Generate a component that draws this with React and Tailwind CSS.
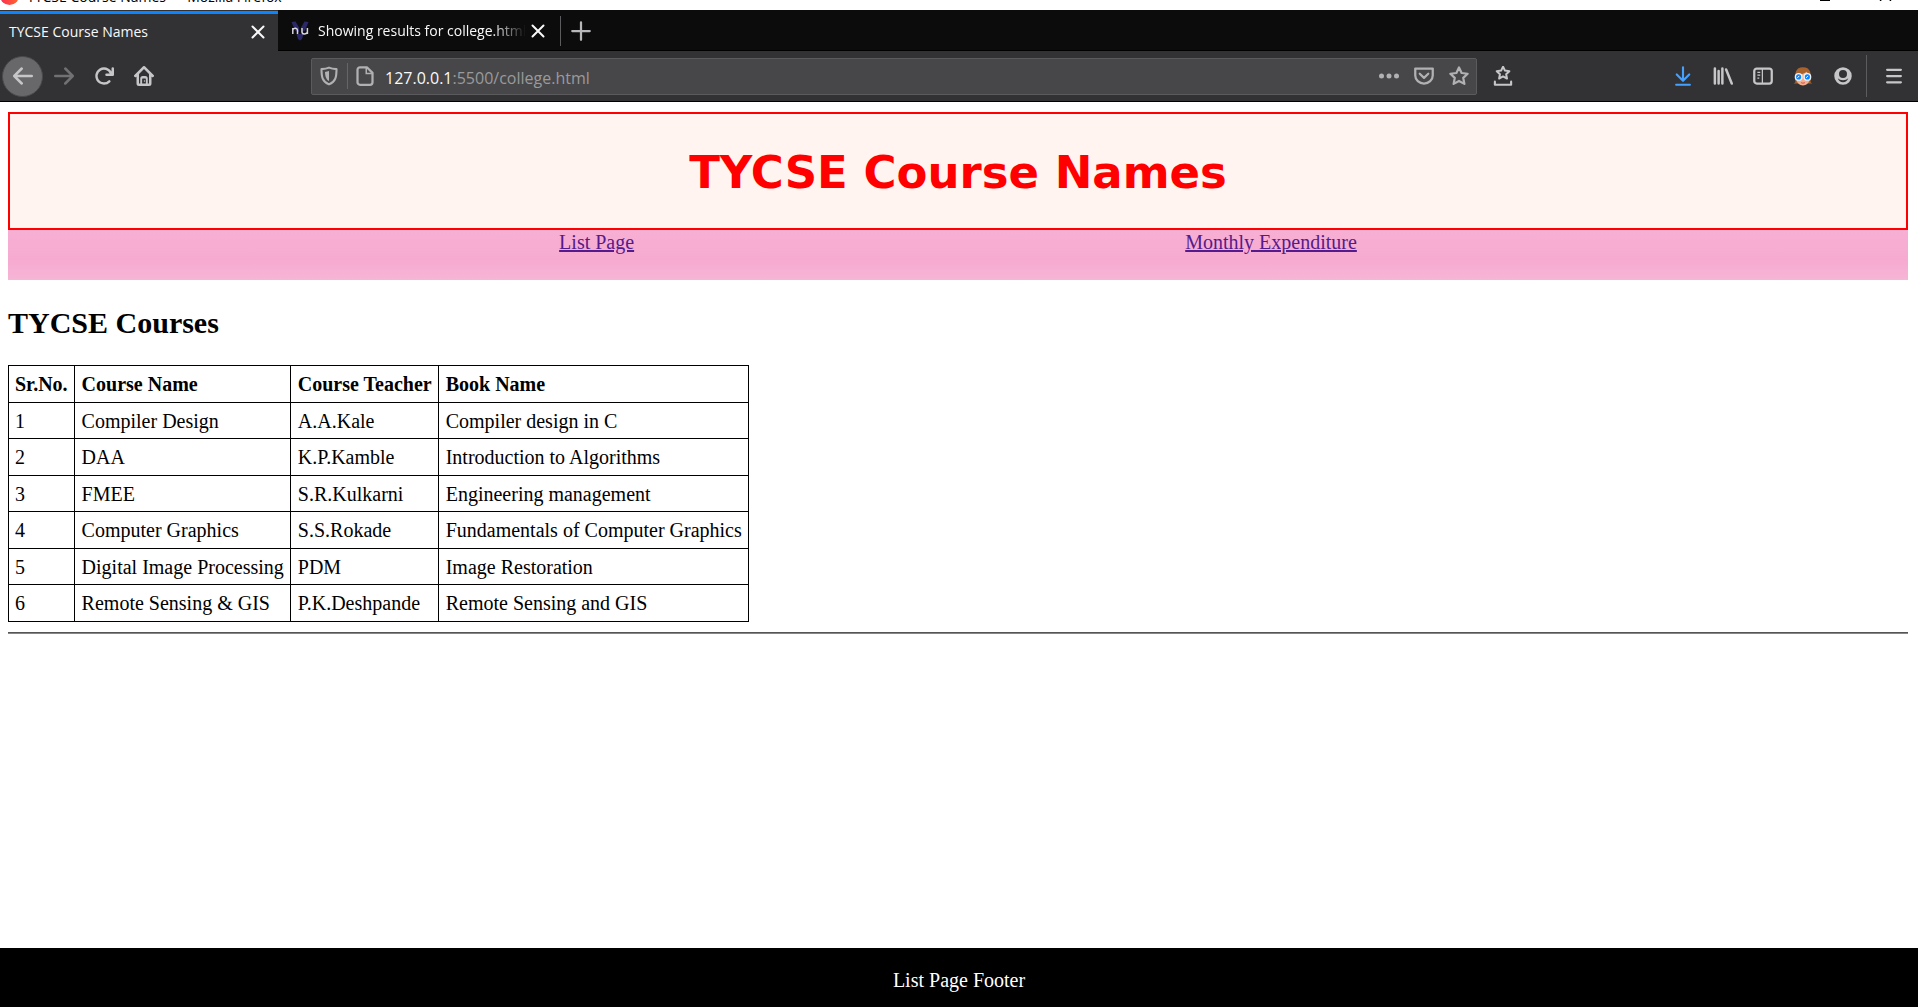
const courses = [
  ["1", "Compiler Design", "A.A.Kale", "Compiler design in C"],
  ["2", "DAA", "K.P.Kamble", "Introduction to Algorithms"],
  ["3", "FMEE", "S.R.Kulkarni", "Engineering management"],
  ["4", "Computer Graphics", "S.S.Rokade", "Fundamentals of Computer Graphics"],
  ["5", "Digital Image Processing", "PDM", "Image Restoration"],
  ["6", "Remote Sensing & GIS", "P.K.Deshpande", "Remote Sensing and GIS"],
];
const columns = ["Sr.No.", "Course Name", "Course Teacher", "Book Name"];

function Icon({ children, className = "size-5" }) {
  return (
    <svg viewBox="0 0 16 16" className={`shrink-0 ${className}`} fill="currentColor" aria-hidden="true">
      {children}
    </svg>
  );
}

function IconButton({ label, children, className = "w-10" }) {
  return (
    <button type="button" aria-label={label} className={`flex h-10 shrink-0 items-center justify-center ${className}`}>
      {children}
    </button>
  );
}

const starPath = "M8 1.2l2.1 4.4 4.8.6-3.5 3.3.9 4.8L8 12l-4.3 2.3.9-4.8L1.1 6.2l4.8-.6z";

function CloseIcon() {
  return (
    <Icon className="size-4">
      <path d="M2.5 2.5l11 11M13.5 2.5l-11 11" stroke="currentColor" strokeWidth="2" strokeLinecap="round" />
    </Icon>
  );
}

function TitleBar() {
  return (
    <div className="flex h-[10px] items-end overflow-hidden bg-white pb-[5px] text-black">
      <svg viewBox="0 0 20 20" className="size-[19px] shrink-0" aria-hidden="true">
        <defs>
          <linearGradient id="flame" x1="0" y1="0" x2="1" y2="0">
            <stop offset="0" stopColor="#ff2a56" />
            <stop offset="1" stopColor="#ff6a2a" />
          </linearGradient>
        </defs>
        <circle cx="10" cy="10" r="10" fill="url(#flame)" />
      </svg>
      <span className="ml-2 whitespace-nowrap text-sm leading-4">TYCSE Course Names — Mozilla Firefox</span>
      <svg viewBox="0 0 74 12" className="mr-6 mb-1 ml-auto h-3 w-[74px] shrink-0" fill="none" stroke="#000" aria-hidden="true">
        <path d="M0 11.5h10" strokeWidth="1" />
        <path d="M60 12l11-11M60 1l11 11" strokeWidth="1.2" />
      </svg>
    </div>
  );
}

function TabBar() {
  return (
    <div className="flex h-[41px] bg-[#0c0c0d] text-sm text-[#f9f9fa]">
      <div className="flex w-[278px] shrink-0 flex-col bg-[#323234]">
        <div className="mt-px h-[3px] shrink-0 bg-[#0a84ff]" />
        <div className="flex flex-1 items-center justify-between pr-3 pb-[2px] pl-[9px]">
          <span>TYCSE Course Names</span>
          <button type="button" aria-label="Close tab"><CloseIcon /></button>
        </div>
      </div>
      <div className="flex min-w-0 flex-1 items-center border-b border-black pt-[2px]">
        <svg viewBox="0 0 20 20" className="ml-3 size-5 shrink-0" aria-hidden="true">
          <path d="M1.500 1l4-.5 3.500 6v5l-4-2zM18.500 1l-4-.5-3.500 6v5l4-2zM6.500 13h7l-1.500 5-2 1.500L8 18z" fill="#2b2867" />
          <path d="M2.800 13V7M2.800 8.500c1.500-2 4.700-1.600 4.700.8V13M12 7v4c0 2.500 4 2.500 5.400.5M17.400 7v6" fill="none" stroke="#d8d5dd" strokeWidth="1.500" />
        </svg>
        <span className="ml-2 w-52 shrink-0 overflow-hidden whitespace-nowrap [mask-image:linear-gradient(to_right,black_84%,transparent)]">
          Showing results for college.html
        </span>
        <button type="button" aria-label="Close tab" className="ml-1"><CloseIcon /></button>
        <div className="mr-[10px] ml-[14px] h-[30px] w-px bg-[#5c5c5e]" />
        <button type="button" aria-label="New tab">
          <Icon className="size-5 text-[#b8b8ba]"><path d="M8 1v14M1 8h14" stroke="currentColor" strokeWidth="1.800" strokeLinecap="round" /></Icon>
        </button>
      </div>
    </div>
  );
}

function AddressBar() {
  return (
    <div className="flex h-[37px] min-w-0 flex-1 items-center rounded-xs border border-[#5b5b5d] bg-[#474749] pl-[7px] text-[#b1b1b3]">
      <Icon>
        <path d="M8 1.300c2 .9 4 1.100 6 1.200 0 6-.6 10-6 12.200C2.600 12.500 2 8.500 2 2.500c2-.1 4-.3 6-1.200z" fill="none" stroke="currentColor" strokeWidth="1.700" strokeLinejoin="round" />
        <path d="M8 4v8C5.800 10.800 5 8.600 4.800 4.700 6 4.600 7 4.400 8 4z" />
      </Icon>
      <div className="mr-[7px] ml-2 h-[26px] w-px bg-[#656567]" />
      <Icon>
        <path d="M2 3a2 2 0 0 1 2-2h5.500L14 5.500V13a2 2 0 0 1-2 2H4a2 2 0 0 1-2-2z" fill="none" stroke="currentColor" strokeWidth="1.800" strokeLinejoin="round" />
        <path d="M9 1.500V6h4.500" fill="none" stroke="currentColor" strokeWidth="1.200" />
      </Icon>
      <div className="ml-[10px] flex-1 pt-[3px] whitespace-nowrap text-base text-[#9a9a9c]">
        <span className="text-[#f9f9fa]">127.0.0.1</span>:5500/college.html
      </div>
      <IconButton label="Page actions" className="w-[35px]">
        <Icon><circle cx="2" cy="8" r="2" /><circle cx="8" cy="8" r="2" /><circle cx="14" cy="8" r="2" /></Icon>
      </IconButton>
      <IconButton label="Save to Pocket" className="w-[35px]">
        <Icon>
          <path d="M1 2h14v5.500a7 6.500 0 0 1-14 0z" fill="none" stroke="currentColor" strokeWidth="1.800" strokeLinejoin="round" />
          <path d="M4.600 6.200L8 9.500l3.400-3.300" fill="none" stroke="currentColor" strokeWidth="1.800" strokeLinecap="round" strokeLinejoin="round" />
        </Icon>
      </IconButton>
      <IconButton label="Bookmark this page" className="w-[35px]">
        <Icon><path d={starPath} fill="none" stroke="currentColor" strokeWidth="1.800" strokeLinejoin="round" /></Icon>
      </IconButton>
    </div>
  );
}

function Toolbar() {
  return (
    <div className="flex h-[51px] items-center border-b border-black bg-[#323234] pr-1 pl-[2px] text-[#c6c6c8]">
      <button type="button" aria-label="Back" className="mr-px flex size-[41px] shrink-0 items-center justify-center rounded-full border border-[#4a4a4c] bg-[#68686a]">
        <Icon><path d="M15 7H3.414l4.293-4.293a1 1 0 0 0-1.414-1.414l-6 6a1 1 0 0 0 0 1.414l6 6a1 1 0 0 0 1.414-1.414L3.414 9H15a1 1 0 0 0 0-2z" /></Icon>
      </button>
      <IconButton label="Forward">
        <Icon className="size-5 text-[#717173]"><path d="M15.707 7.293l-6-6a1 1 0 0 0-1.414 1.414L12.586 7H1a1 1 0 0 0 0 2h11.586l-4.293 4.293a1 1 0 1 0 1.414 1.414l6-6a1 1 0 0 0 0-1.414z" /></Icon>
      </IconButton>
      <IconButton label="Reload">
        <Icon><path d="M15 1a1 1 0 0 0-1 1v2.418A6.995 6.995 0 1 0 8 15a6.954 6.954 0 0 0 4.950-2.050 1 1 0 0 0-1.414-1.414A5.019 5.019 0 1 1 12.549 6H10a1 1 0 0 0 0 2h5a1 1 0 0 0 1-1V2a1 1 0 0 0-1-1z" /></Icon>
      </IconButton>
      <IconButton label="Home">
        <Icon>
          <path d="M15.707 7.293l-7-7a1 1 0 0 0-1.414 0l-7 7a1 1 0 0 0 1.414 1.414L2 8.414V14a2 2 0 0 0 2 2h8a2 2 0 0 0 2-2V8.414l.293.293a1 1 0 0 0 1.414-1.414zM6.500 14v-3.500a.5.5 0 0 1 .5-.5h2a.5.5 0 0 1 .5.500V14zm5.500 0h-1v-4a2 2 0 0 0-2-2H7a2 2 0 0 0-2 2v4H4V6.414l4-4 4 4z" />
          <circle cx="8.400" cy="12" r=".6" />
        </Icon>
      </IconButton>
      <div className="w-[147px] shrink" />
      <AddressBar />
      <IconButton label="Bookmarks tray" className="ml-[6px] w-10">
        <Icon>
          <path d={starPath} fill="none" stroke="currentColor" strokeWidth="2.200" strokeLinejoin="round" transform="translate(2.200 -.4) scale(.73)" />
          <path d="M1.500 12.500V15h13v-2.500" fill="none" stroke="currentColor" strokeWidth="1.700" strokeLinecap="round" strokeLinejoin="round" />
        </Icon>
      </IconButton>
      <div className="w-[140px] shrink" />
      <IconButton label="Downloads">
        <Icon className="size-5 text-[#45a1ff]">
          <path d="M8 1v10M3 6.800l5 5 5-5M2.500 15h11" fill="none" stroke="currentColor" strokeWidth="1.700" strokeLinecap="round" strokeLinejoin="round" />
        </Icon>
      </IconButton>
      <IconButton label="Library">
        <Icon>
          <path d="M1.500 2v12M4.500 4v10M7.500 2v12M10.500 2.800L15 14" fill="none" stroke="currentColor" strokeWidth="2" strokeLinecap="round" />
        </Icon>
      </IconButton>
      <IconButton label="Sidebars">
        <Icon>
          <rect x="1" y="2" width="14" height="12" rx="2" fill="none" stroke="currentColor" strokeWidth="1.800" />
          <path d="M7.500 2v12M3.500 5h2.300M3.500 7.300h2.300M3.500 9.600h1.500" fill="none" stroke="currentColor" strokeWidth="1" />
        </Icon>
      </IconButton>
      <IconButton label="Extension">
        <Icon>
          <path d="M2 13C1 6 2 1 8 1s7 5 6 12l1.500 1H.5z" fill="#a8632d" />
          <path d="M3 7.500C6 7 9 6 11 4.500c1 1.500 1.500 2.500 2 3.500V11c0 2.500-2.500 4.500-5 4.500S3 13.500 3 11z" fill="#f3b08c" />
          <circle cx="4.500" cy="8.700" r="2.600" fill="#0a84ff" stroke="#e8f3ff" strokeWidth="1.100" />
          <circle cx="11.500" cy="8.700" r="2.600" fill="#0a84ff" stroke="#e8f3ff" strokeWidth="1.100" />
          <path d="M3.500 9.500l1.500-1.600M10.500 9.500L12 7.900" stroke="#fff" strokeWidth=".8" />
          <path d="M6.500 13.200q1.500 1 3 0" fill="none" stroke="#d45d5d" strokeWidth=".9" />
        </Icon>
      </IconButton>
      <IconButton label="Account">
        <Icon>
          <path fillRule="evenodd" d="M8 1a7 7 0 1 1 0 14A7 7 0 0 1 8 1zm0 2.200A3.200 3.200 0 0 0 4.800 6.400 3.200 3.200 0 0 0 8 9.600a3.200 3.200 0 0 0 3.200-3.200A3.200 3.200 0 0 0 8 3.200zM3.800 9.800C4.600 12 6 13 8 13s3.400-1 4.200-3.200c-1 1-2.400 1.600-4.200 1.600s-3.200-.6-4.200-1.600z" />
        </Icon>
      </IconButton>
      <div className="mr-[5px] ml-[3px] h-[42px] w-px shrink-0 bg-[#5c5c5e]" />
      <IconButton label="Open menu" className="ml-[2px] w-10">
        <Icon><path d="M2.500 3h11M2.500 8h11M2.500 13h11" stroke="currentColor" strokeWidth="1.800" strokeLinecap="round" /></Icon>
      </IconButton>
    </div>
  );
}

export default function App() {
  return (
    <div className="flex min-h-screen flex-col bg-white">
      <div className="font-['Open_Sans','Noto_Sans',sans-serif]">
        <TitleBar />
        <TabBar />
        <Toolbar />
      </div>
      <div className="flex flex-1 flex-col font-['Liberation_Serif',serif] text-xl leading-6 text-black">
        <main className="flex-1 pt-[10px] pr-[10px] pl-2">
          <header className="border-2 border-[#ff0000] bg-[#fff4ef] pt-7 pb-6">
            <h1 className="text-center font-['DejaVu_Sans',sans-serif] text-[45px] leading-[62px] font-bold text-[#ff0000]">
              TYCSE Course Names
            </h1>
          </header>
          <nav className="flex h-[50px] justify-evenly bg-linear-to-b from-[#f8afd4] via-[#f6aad0] via-60% to-[#f6b6d6] text-[#551a8b]">
            <a href="#list" className="underline">List Page</a>
            <a href="#expenditure" className="underline">Monthly Expenditure</a>
          </nav>
          <h2 className="my-[25px] text-[30px] leading-[35px] font-bold">TYCSE Courses</h2>
          <table className="border-collapse">
            <thead>
              <tr className="h-[37px]">
                {columns.map((name) => (
                  <th key={name} scope="col" className="border border-black px-[6px] text-left not-first:pl-[7px]">{name}</th>
                ))}
              </tr>
            </thead>
            <tbody>
              {courses.map((row) => (
                <tr key={row[0]} className="odd:h-9 even:h-[37px]">
                  {row.map((cell) => (
                    <td key={cell} className="border border-black px-[6px] whitespace-nowrap not-first:pl-[7px]">{cell}</td>
                  ))}
                </tr>
              ))}
            </tbody>
          </table>
          <hr className="mt-[10px] h-[2px] border-t border-[#555557] bg-[#868686]" />
        </main>
        <footer className="bg-black pt-5 pb-[15px] text-center text-white">List Page Footer</footer>
      </div>
    </div>
  );
}
